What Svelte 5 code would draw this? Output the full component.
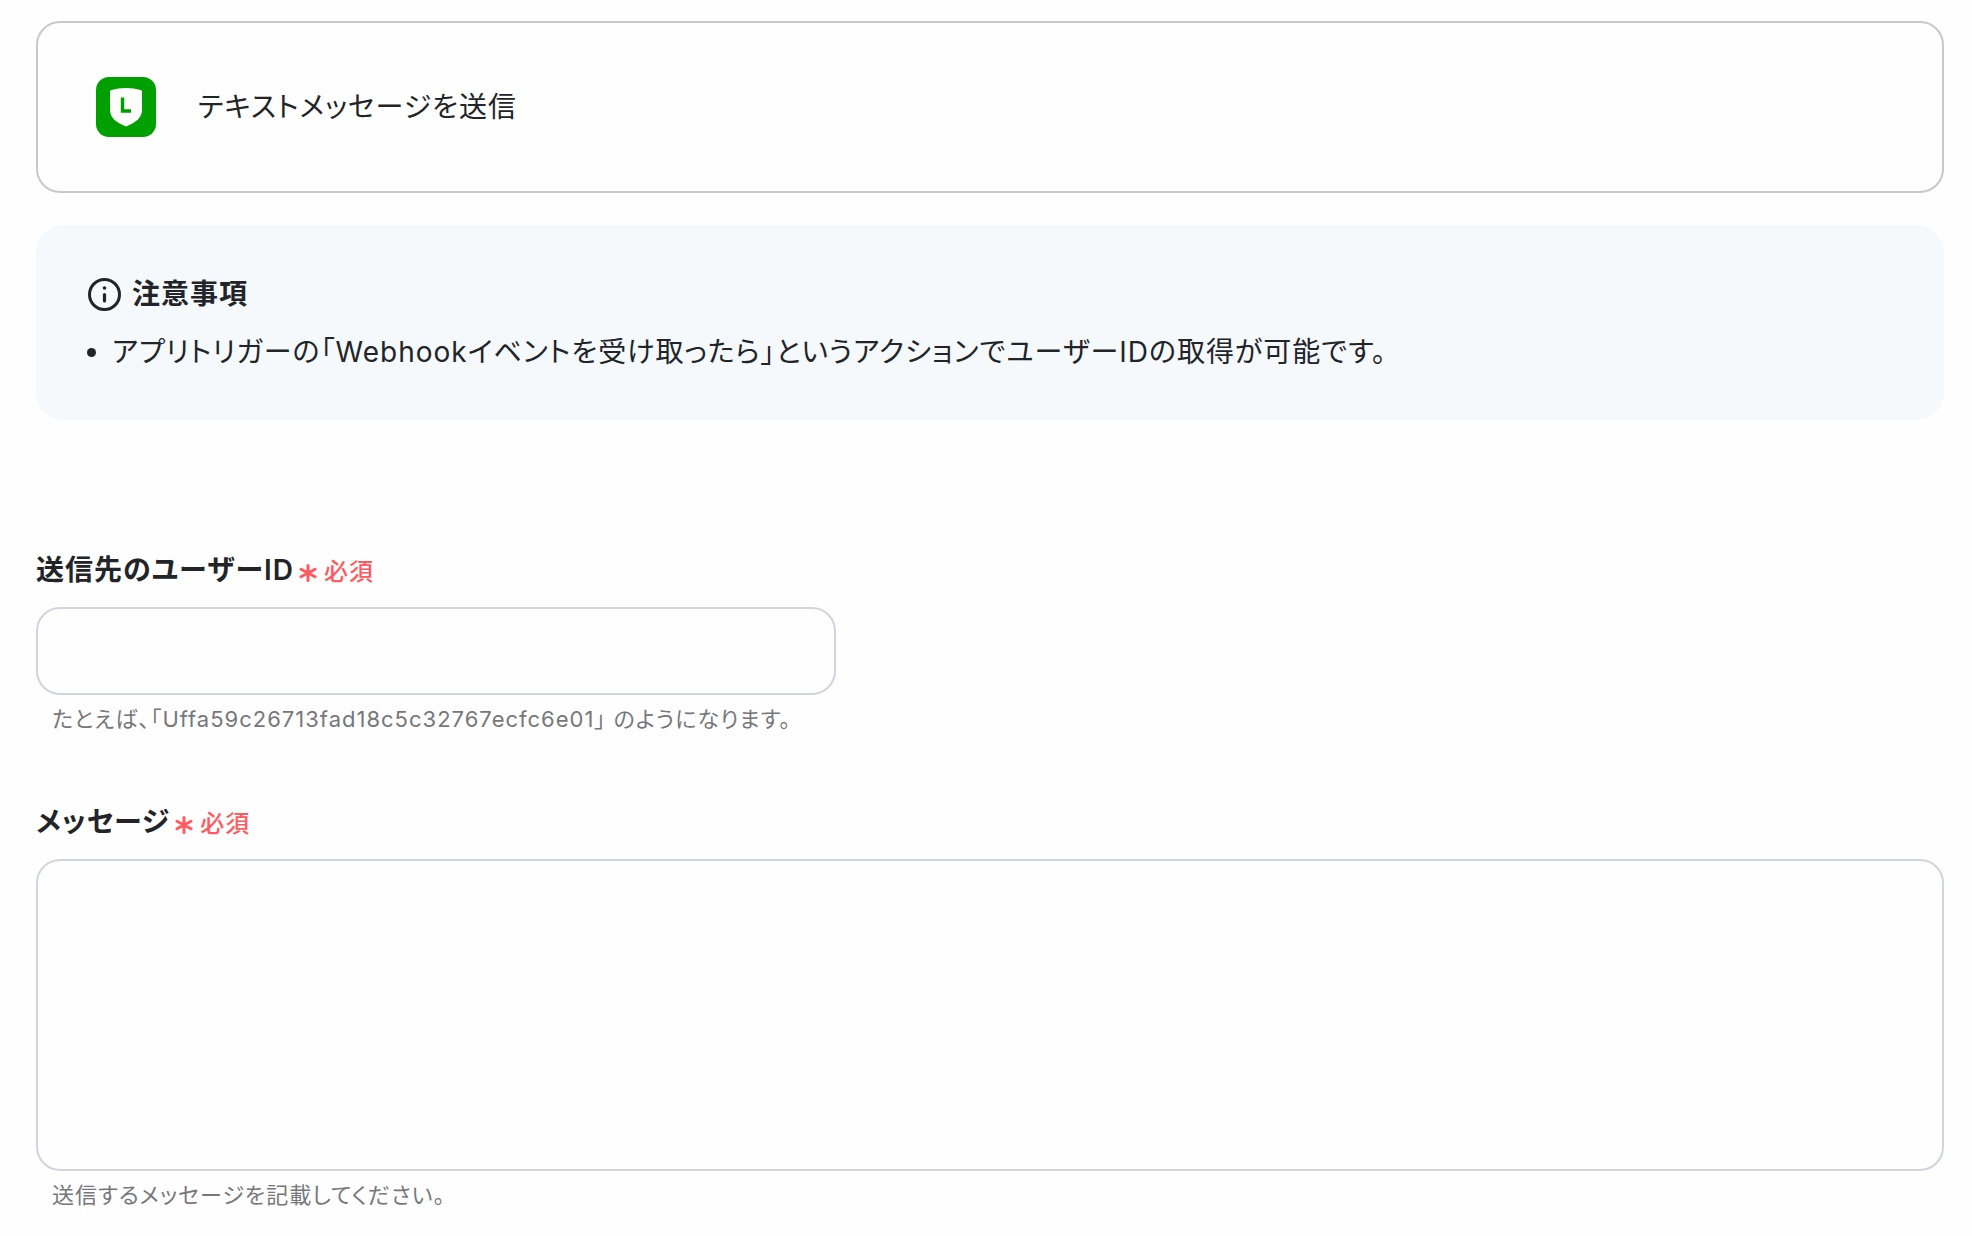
<script>
    let userId = "";
    let message = "";
</script>

<main>
    <section class="action-card">
        <svg class="app-icon" viewBox="0 0 60 60" aria-hidden="true">
            <rect width="60" height="60" rx="13" fill="#009f00" />
            <path
                d="M14 14.5 Q14 13.3 15.4 12.9 Q22 11 30 11 Q38 11 44.6 12.9 Q46 13.3 46 14.5 V33 C46 41 39 46 30 49.5 C21 46 14 41 14 33 Z"
                fill="#fff"
            />
            <path d="M26.5 20.5 V34 H35" fill="none" stroke="#009f00" stroke-width="3.4" />
        </svg>
        <span>テキストメッセージを送信</span>
    </section>

    <section class="notice">
        <h2>
            <svg class="info-icon" viewBox="0 0 34 34" aria-hidden="true">
                <circle cx="16.5" cy="17.5" r="15" fill="none" stroke="currentColor" stroke-width="3" />
                <circle cx="16.5" cy="11" r="1.8" fill="currentColor" />
                <path d="M16.5 17.5 V24" stroke="currentColor" stroke-width="3.2" stroke-linecap="round" />
            </svg>
            注意事項
        </h2>
        <ul>
            <li>アプリトリガーの「Webhookイベントを受け取ったら」というアクションでユーザーIDの取得が可能です。</li>
        </ul>
    </section>

    <form>
        <div class="field">
            <label for="user-id">
                送信先のユーザーID
                <span class="required">
                    <svg class="asterisk" viewBox="0 0 18 20" aria-hidden="true">
                        <path d="M9 3.5 V18.5 M2 7.2 L16 14.8 M16 7.2 L2 14.8" />
                    </svg>
                    必須
                </span>
            </label>
            <input id="user-id" type="text" bind:value={userId} aria-describedby="user-id-help" />
            <p id="user-id-help">たとえば、「Uffa59c26713fad18c5c32767ecfc6e01」 のようになります。</p>
        </div>

        <div class="field">
            <label for="message">
                メッセージ
                <span class="required">
                    <svg class="asterisk" viewBox="0 0 18 20" aria-hidden="true">
                        <path d="M9 3.5 V18.5 M2 7.2 L16 14.8 M16 7.2 L2 14.8" />
                    </svg>
                    必須
                </span>
            </label>
            <textarea id="message" bind:value={message} aria-describedby="message-help"></textarea>
            <p id="message-help">送信するメッセージを記載してください。</p>
        </div>
    </form>
</main>

<style>
    :global(body) {
        margin: 0;
        background: #fefefe;
    }

    main {
        padding: 21px 28px 16px 36px;
        color: #222428;
        font-family: Inter, "Noto Sans CJK JP", sans-serif;
        font-feature-settings: "palt";
        font-size: 28px;
        line-height: 40px;
        letter-spacing: 1px;
    }

    .action-card {
        display: flex;
        align-items: center;
        gap: 42px;
        padding: 54px 58px;
        border: 2px solid #c8c7ca;
        border-radius: 24px;
    }

    .app-icon {
        width: 60px;
        height: 60px;
    }

    .notice {
        margin-top: 32px;
        padding: 49px 52px 48px;
        border-radius: 28px;
        background: #f5f9fc;
    }

    h2 {
        display: flex;
        align-items: center;
        gap: 10px;
        margin: 0 0 18px;
        font-size: 28px;
        font-weight: 600;
    }

    .info-icon {
        width: 34px;
        height: 34px;
    }

    ul {
        margin: 0;
        padding-left: 24px;
    }

    form {
        display: flex;
        flex-direction: column;
        gap: 66px;
        margin-top: 130px;
    }

    .field {
        display: flex;
        flex-direction: column;
    }

    label {
        display: flex;
        align-items: flex-end;
        gap: 5px;
        margin-bottom: 17px;
        font-weight: 600;
    }

    .required {
        display: flex;
        align-items: center;
        gap: 7px;
        color: #ff5a5f;
        font-size: 24px;
        font-weight: 500;
        line-height: 36px;
    }

    .asterisk {
        width: 18px;
        height: 20px;
        fill: none;
        stroke: currentColor;
        stroke-width: 3;
        stroke-linecap: round;
    }

    input,
    textarea {
        box-sizing: border-box;
        width: 100%;
        padding: 16px 24px;
        border: 2px solid #cfd4de;
        border-radius: 24px;
        background: transparent;
        color: inherit;
        font: inherit;
    }

    input {
        max-width: 800px;
        height: 88px;
    }

    textarea {
        height: 312px;
        resize: none;
    }

    p {
        margin: 8px 0 0;
        padding-left: 16px;
        color: #77777b;
        font-size: 22px;
        line-height: 33px;
    }
</style>
